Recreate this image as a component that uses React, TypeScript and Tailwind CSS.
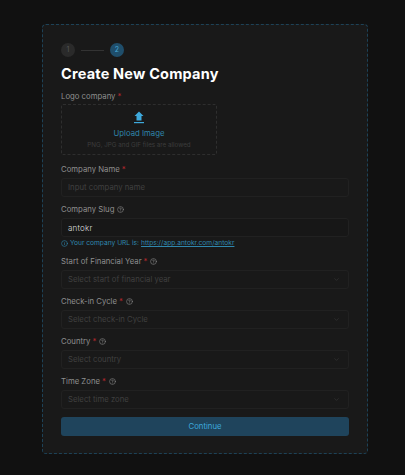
import { ChevronDown, CircleHelp, Info } from "lucide-react";

const font = { fontFamily: '"Inter", "Open Sans", sans-serif' };

function Label({ text, required, help }: { text: string; required?: boolean; help?: boolean }) {
  return (
    <div className="flex h-[9px] items-center gap-[2px] text-[7.75px] leading-[9px] text-[#8f8f8f]">
      <span>{text}</span>
      {required && <span className="text-[#b3272d]">*</span>}
      {help && <CircleHelp size={7} className="ml-[1px] text-[#8a8a8a]" />}
    </div>
  );
}

function SelectField({ label, placeholder }: { label: string; placeholder: string }) {
  return (
    <div className="flex flex-col gap-[4px]">
      <Label text={label} required help />
      <div className="flex h-[19px] items-center justify-between rounded-[3px] border border-[#212121] pl-[6px] pr-[8px] text-[7.75px] text-[#404040]">
        <span>{placeholder}</span>
        <ChevronDown size={7} className="text-[#3d3d3d]" />
      </div>
    </div>
  );
}

export default function App() {
  return (
    <main className="flex h-[475px] w-[405px] bg-[#111111] pl-[42px] pt-[24px]" style={font}>
      <div className="flex h-[430px] w-[326px] flex-col rounded-[4px] border border-dashed border-[#1d4257] bg-[#191919] px-[18px] pt-[18px]">
        <div className="flex items-center gap-[6px]">
          <div className="flex h-[14px] w-[14px] items-center justify-center rounded-full bg-[#2a2a2a] text-[7px] text-[#555555]">1</div>
          <div className="h-px w-[23px] bg-[#333333]" />
          <div className="flex h-[14px] w-[14px] items-center justify-center rounded-full bg-[#1f4e6b] text-[7px] text-[#48a9d6]">2</div>
        </div>

        <h1 className="mt-[8px] text-[14.5px] font-bold leading-[18px] tracking-[0.2px] text-white">Create New Company</h1>

        <div className="mt-[9px] flex flex-col gap-[3px]">
          <Label text="Logo company" required />
          <div className="flex h-[51px] w-[156px] flex-col items-center rounded-[2px] border border-dashed border-[#2e2e2e] pt-[6px]">
            <svg width="12" height="13" viewBox="0 0 12 13" fill="#3ea9dc">
              <path d="M6 0.5 L10.5 5 H8.5 V9.5 H3.5 V5 H1.5 Z" />
              <rect x="1" y="11" width="10" height="1.2" />
            </svg>
            <span className="mt-[4px] text-[7.75px] leading-[10px] text-[#2f87ad]">Upload Image</span>
            <span className="mt-[3px] text-[6.25px] leading-[9px] text-[#3d3d3d]">PNG, JPG and GIF files are allowed</span>
          </div>
        </div>

        <div className="mt-[10px] flex flex-col gap-[4px]">
          <Label text="Company Name" required />
          <div className="flex h-[19px] items-center rounded-[3px] border border-[#212121] pl-[6px] text-[7.75px] text-[#404040]">Input company name</div>
        </div>

        <div className="mt-[8px] flex flex-col gap-[4px]">
          <Label text="Company Slug" help />
          <div className="flex h-[19px] items-center rounded-[3px] border border-[#212121] bg-[#171717] pl-[6px] text-[8px] font-light tracking-[0.2px] text-[#dddddd]">antokr</div>
          <div className="mt-[-2px] flex h-[9px] items-center gap-[2px] text-[6.65px] leading-[9px] text-[#2f87ad]">
            <Info size={7} />
            <span>Your company URL is:</span>
            <span className="underline">https://app.antokr.com/antokr</span>
          </div>
        </div>

        <div className="mt-[9px] flex flex-col gap-[8px]">
          <SelectField label="Start of Financial Year" placeholder="Select start of financial year" />
          <SelectField label="Check-in Cycle" placeholder="Select check-in Cycle" />
          <SelectField label="Country" placeholder="Select country" />
          <SelectField label="Time Zone" placeholder="Select time zone" />
        </div>

        <button className="mt-[8px] h-[19px] rounded-[3px] bg-[#1f445c] text-[7.75px] text-[#3ea9dc]">Continue</button>
      </div>
    </main>
  );
}
